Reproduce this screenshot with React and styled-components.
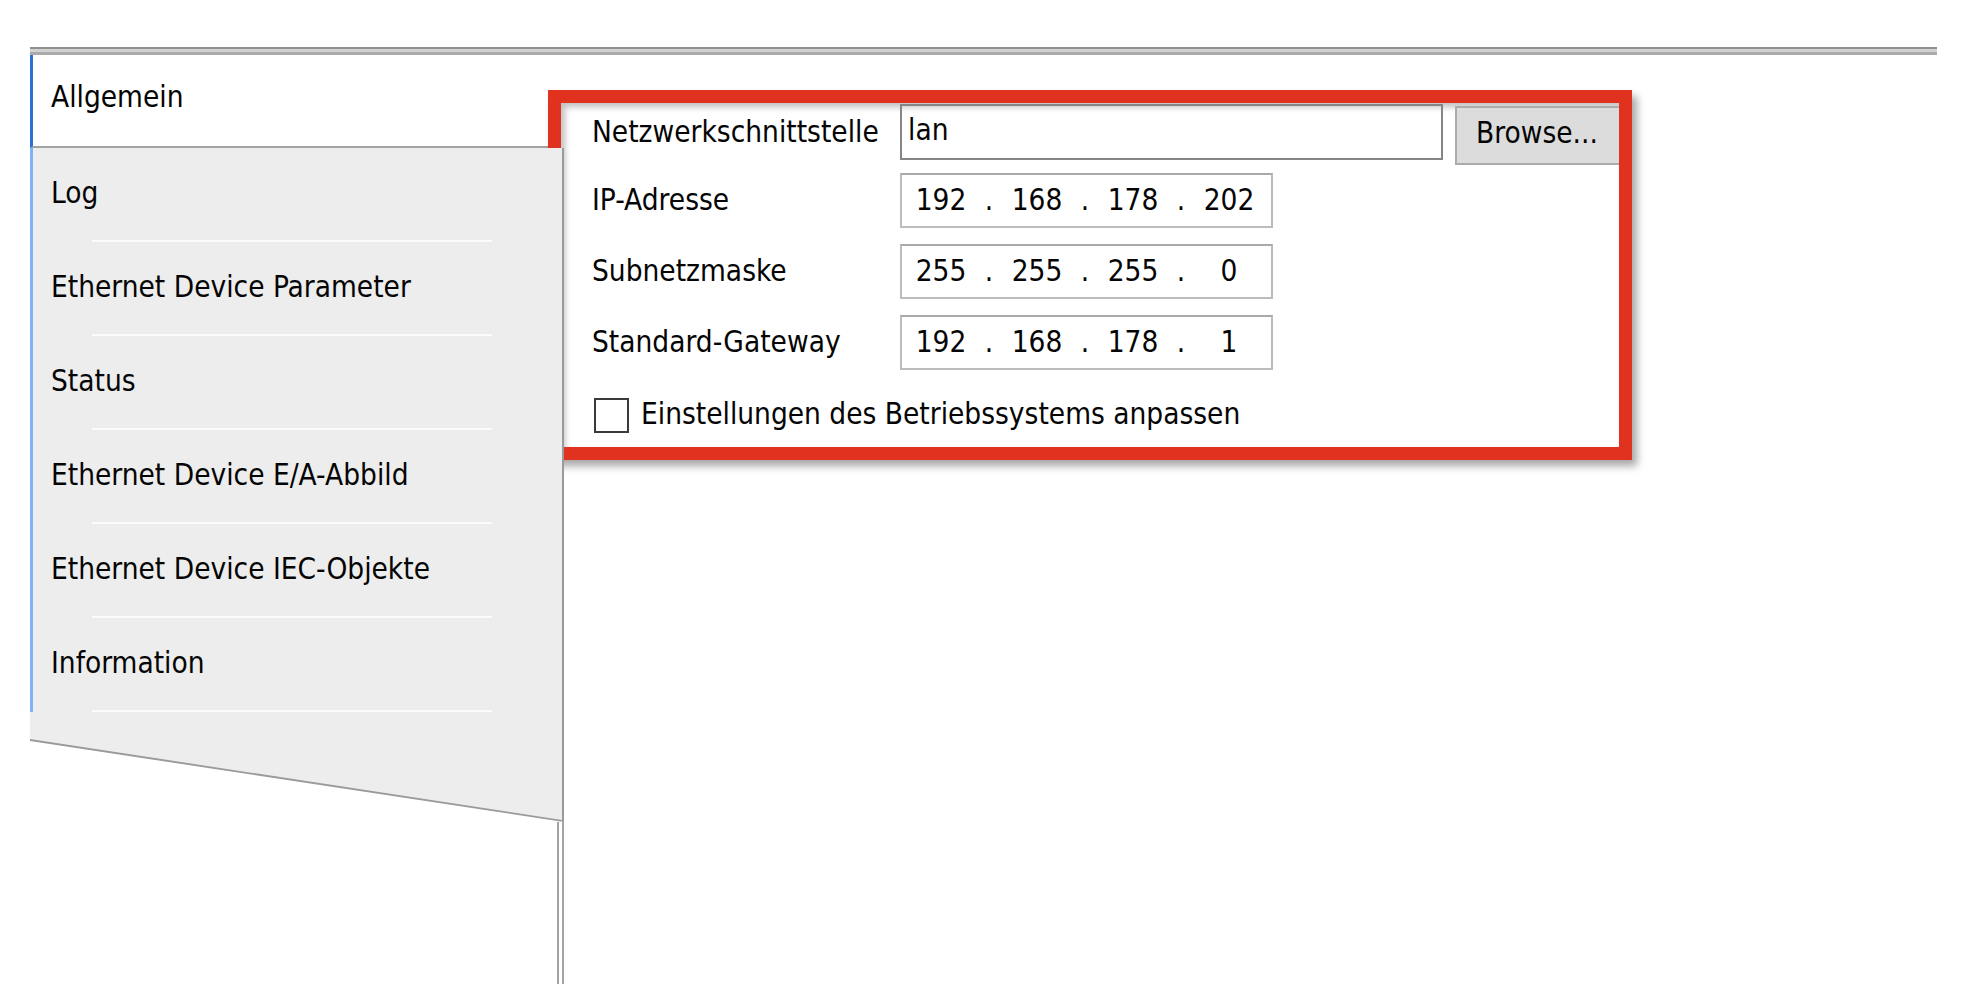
import React from "react";
import styled, { createGlobalStyle } from "styled-components";

const GlobalStyle = createGlobalStyle`
  html, body {
    margin: 0;
    padding: 0;
    background: #fff;
  }
  body {
    font-family: "DejaVu Sans Condensed", "Liberation Sans", sans-serif;
    color: #050505;
  }
`;

const Page = styled.div`
  width: 1964px;
  height: 984px;
  padding: 47px 27px 0 30px;
  box-sizing: border-box;
  overflow: hidden;
`;

const TopRule = styled.div`
  height: 8px;
  background: linear-gradient(#8f8f8f 0 2px, #d2d2d2 2px 5px, #ababab 5px 8px);
`;

const Body = styled.div`
  display: flex;
  height: 929px;
`;

/* 왼쪽 탭 목록 */
const Sidebar = styled.div`
  width: 534px;
  flex: none;
  display: flex;
  flex-direction: column;
`;

const ActiveTab = styled.div`
  height: 84px;
  display: flex;
  align-items: center;
  padding-left: 18px;
  padding-bottom: 7px;
  background: #fff;
  border-left: 3px solid #2f6fd8;
  border-bottom: 2px solid #a3a3a3;
  font-size: 29.5px;
`;

const SlantEdge = styled.div`
  height: 674px;
  background: #9a9a9a;
  clip-path: polygon(0 0, 100% 0, 100% 100%, 0 593px);
`;

const GrayPanel = styled.div`
  height: 672px;
  margin-right: 2px;
  background: #ededed;
  clip-path: polygon(0 0, 100% 0, 100% 100%, 0 591px);
`;

const TabItem = styled.div`
  height: 94px;
  display: flex;
  flex-direction: column;
  border-left: 3px solid #7fb3f4;
  box-sizing: border-box;
`;

const TabLabel = styled.div`
  flex: 1;
  display: flex;
  align-items: center;
  padding-left: 18px;
  padding-bottom: 3px;
  font-size: 29.5px;
`;

const TabRule = styled.div`
  height: 2px;
  width: 400px;
  margin-left: 59px;
  background: #fbfbfb;
`;

const BottomArea = styled.div`
  flex: 1;
  display: flex;
  border-right: 2px solid #a3a3a3;
`;

const PageEdge = styled.div`
  width: 527px;
  border-right: 2px solid #a3a3a3;
`;

/* 오른쪽 내용 */
const Main = styled.div`
  flex: 1;
  padding-top: 35px;
`;

const HighlightFrame = styled.div`
  width: 1027px;
  height: 344px;
  margin-left: -16px;
  padding-left: 31px;
  border: 13px solid #e1321f;
  background: #fff;
  overflow: hidden;
  box-shadow: 5px 6px 8px rgba(0, 0, 0, 0.35),
    inset 4px 4px 6px rgba(0, 0, 0, 0.25);
  display: flex;
  flex-direction: column;
`;

const Row = styled.div`
  display: flex;
  align-items: ${(p) => (p.top ? "flex-start" : "center")};
  height: ${(p) => p.h}px;
  margin-top: ${(p) => p.mt || 0}px;
`;

const Label = styled.div`
  width: 308px;
  flex: none;
  font-size: 29.5px;
  align-self: center;
  padding-bottom: ${(p) => (p.first ? 5 : 1)}px;
`;

const TextInput = styled.div`
  flex: none;
  width: 533px;
  height: 48px;
  margin-top: 1px;
  border: 2px solid #858585;
  display: flex;
  align-items: center;
  padding: 0 0 4px 6px;
  font-size: 29.5px;
`;

const BrowseButton = styled.div`
  flex: none;
  width: 170px;
  height: 59px;
  margin-left: 12px;
  margin-top: 3px;
  box-sizing: border-box;
  background: #dcdcdc;
  border: 2px solid #ababab;
  display: flex;
  align-items: center;
  padding: 0 0 5px 19px;
  font-size: 29.5px;
`;

const IpBox = styled.div`
  flex: none;
  width: 373px;
  height: 55px;
  box-sizing: border-box;
  border: 2px solid #bcbcbc;
  border-top-color: #a9a9a9;
  display: flex;
  align-items: center;
  padding: 0 0 1px 4px;
`;

const Octet = styled.span`
  width: 70px;
  text-align: center;
  font-size: 29.5px;
`;

const Dot = styled.span`
  width: 26px;
  text-align: center;
  font-size: 29.5px;
`;

const CheckRow = styled.label`
  display: flex;
  align-items: center;
  gap: 12px;
  margin-top: 27px;
  height: 33px;
  font-size: 29.5px;
`;

const CheckBox = styled.span`
  flex: none;
  width: 31px;
  height: 31px;
  border: 2px solid #3a3a3a;
  background: #fff;
  margin: 3px 0 0 2px;
`;

const tabs = [
  "Log",
  "Ethernet Device Parameter",
  "Status",
  "Ethernet Device E/A-Abbild",
  "Ethernet Device IEC-Objekte",
  "Information",
];

const ipRows = [
  { label: "IP-Adresse", value: ["192", "168", "178", "202"] },
  { label: "Subnetzmaske", value: ["255", "255", "255", "0"] },
  { label: "Standard-Gateway", value: ["192", "168", "178", "1"] },
];

const IpField = ({ value }) => (
  <IpBox>
    {value.map((v, i) => (
      <React.Fragment key={i}>
        {i > 0 && <Dot>.</Dot>}
        <Octet>{v}</Octet>
      </React.Fragment>
    ))}
  </IpBox>
);

const App = () => {
  return (
    <>
      <GlobalStyle />
      <Page>
        <TopRule />
        <Body>
          <Sidebar>
            <ActiveTab>Allgemein</ActiveTab>
            <SlantEdge>
              <GrayPanel>
                {tabs.map((t) => (
                  <TabItem key={t}>
                    <TabLabel>{t}</TabLabel>
                    <TabRule />
                  </TabItem>
                ))}
              </GrayPanel>
            </SlantEdge>
            <BottomArea>
              <PageEdge />
            </BottomArea>
          </Sidebar>

          <Main>
            <HighlightFrame>
              <Row h={62} top>
                <Label first>Netzwerkschnittstelle</Label>
                <TextInput>lan</TextInput>
                <BrowseButton>Browse...</BrowseButton>
              </Row>
              {ipRows.map((r, i) => (
                <Row key={r.label} h={55} mt={i === 0 ? 8 : 16}>
                  <Label>{r.label}</Label>
                  <IpField value={r.value} />
                </Row>
              ))}
              <CheckRow>
                <CheckBox />
                Einstellungen des Betriebssystems anpassen
              </CheckRow>
            </HighlightFrame>
          </Main>
        </Body>
      </Page>
    </>
  );
};

export default App;
